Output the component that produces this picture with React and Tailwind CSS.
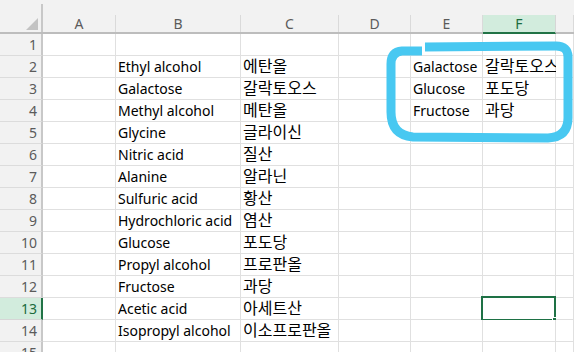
import React from 'react';

const cols = [
  { key: 'A', w: 'w-[73px]' },
  { key: 'B', w: 'w-[125px]' },
  { key: 'C', w: 'w-[98px]', ko: true },
  { key: 'D', w: 'w-[72px]' },
  { key: 'E', w: 'w-[72px]' },
  { key: 'F', w: 'w-[73px]', ko: true },
  { key: 'G', w: 'flex-1' },
];

const rows = {
  2: { B: 'Ethyl alcohol', C: '에탄올', E: 'Galactose', F: '갈락토오스' },
  3: { B: 'Galactose', C: '갈락토오스', E: 'Glucose', F: '포도당' },
  4: { B: 'Methyl alcohol', C: '메탄올', E: 'Fructose', F: '과당' },
  5: { B: 'Glycine', C: '글라이신' },
  6: { B: 'Nitric acid', C: '질산' },
  7: { B: 'Alanine', C: '알라닌' },
  8: { B: 'Sulfuric acid', C: '황산' },
  9: { B: 'Hydrochloric acid', C: '염산' },
  10: { B: 'Glucose', C: '포도당' },
  11: { B: 'Propyl alcohol', C: '프로판올' },
  12: { B: 'Fructose', C: '과당' },
  13: { B: 'Acetic acid', C: '아세트산' },
  14: { B: 'Isopropyl alcohol', C: '이소프로판올' },
};

const font = "font-['Noto_Sans','Noto_Sans_CJK_KR',sans-serif]";

const Row = ({ n }) => {
  const data = rows[n] || {};
  const active = n === 13;
  return (
    <div className="flex h-[22px] shrink-0">
      <div
        className={
          active
            ? 'w-[43px] shrink-0 border-r-2 border-r-[#217346] border-b border-b-[#d6d6d6] bg-[#d2ecdd] text-[#1b6b3e] text-[14px] text-right pr-[4px] leading-[21px]'
            : 'w-[43px] shrink-0 border-r-2 border-r-[#c8c8c8] border-b border-b-[#dcdcdc] bg-[#f2f2f2] text-[#5b5b5b] text-[14px] text-right pr-[4px] leading-[21px]'
        }
      >
        {n}
      </div>
      {cols.map((c) => (
        <div
          key={c.key}
          className={`${c.w} shrink-0 relative border-r border-b border-[#e0e0e0] bg-white text-black pl-[2px] whitespace-nowrap ${
            c.ko ? 'text-[16px] leading-[21px]' : 'text-[14px] leading-[22px]'
          }`}
        >
          {data[c.key]}
          {active && c.key === 'F' && (
            <div className="absolute -left-[2px] -top-[2px] -right-[1px] -bottom-[2px] border-2 border-[#1e7145]">
              <div className="absolute -right-[4px] -bottom-[4px] w-[6px] h-[6px] bg-[#1e7145] border border-white" />
            </div>
          )}
        </div>
      ))}
    </div>
  );
};

export default function App() {
  return (
    <div className={`relative w-[574px] h-[352px] overflow-hidden bg-white ${font}`}>
      {/* column headers */}
      <div className="flex h-[34px] bg-[#f2f2f2] border-b-2 border-[#bdbdbd]">
        <div className="w-[43px] shrink-0 mt-[4px] border-r-2 border-[#c8c8c8] relative">
          <div className="absolute left-[26px] top-[14px] w-0 h-0 border-l-[12px] border-l-transparent border-b-[12px] border-b-[#c3c3c3]" />
        </div>
        {cols.map((c) => (
          <div
            key={c.key}
            className={
              c.key === 'F'
                ? `${c.w} shrink-0 mt-[15px] -mb-[2px] border-r border-[#d6d6d6] border-b-2 border-b-[#217346] bg-[#d2ecdd] text-[#1b6b3e] text-[14px] text-center leading-[17px]`
                : `${c.w} shrink-0 mt-[15px] border-r border-[#dadada] text-[#5b5b5b] text-[14px] text-center leading-[17px]`
            }
          >
            {c.key === 'G' ? '' : c.key}
          </div>
        ))}
      </div>
      {Array.from({ length: 15 }, (_, i) => (
        <Row key={i + 1} n={i + 1} />
      ))}

      {/* hand-drawn highlight */}
      <svg className="absolute left-0 top-0 pointer-events-none" width="574" height="352">
        <path
          d="M422 51 L402 51 Q391 52 391 64 L391 112 Q391 135 413 137 L548 138 Q568 137 568 118 L568 57 Q568 46 556 46 L425 47"
          fill="none"
          stroke="#48c8f1"
          strokeWidth="9"
          strokeLinejoin="round"
        />
      </svg>
    </div>
  );
}
